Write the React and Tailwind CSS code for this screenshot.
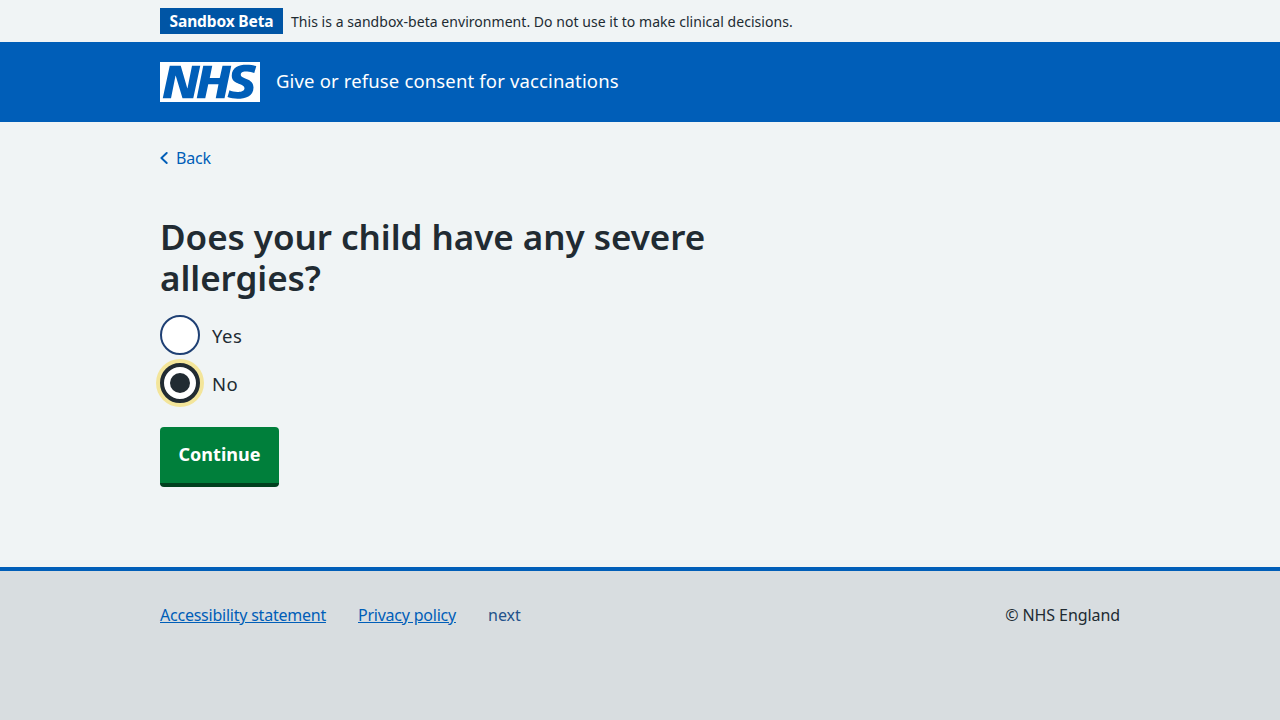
import React from "react";

function NhsLogo() {
  return (
    <svg className="block h-10 w-[100px]" viewBox="0 0 200 80" role="img" aria-label="NHS">
      <path
        fill="#fff"
        d="M200 0v80H0V0h200Zm-27.5 5.5c-14.5 0-29 5-29 22 0 10.2 7.7 13.5 14.7 16.3l.7.3c5.4 2 10.1 3.9 10.1 8.4 0 6.5-8.5 7.5-14 7.5s-12.5-1.5-16-3.5L135 70c5.5 2 13.5 3.5 20 3.5 15.5 0 32-4.5 32-22.5 0-19.5-25.5-16.5-25.5-25.5 0-5.5 5.5-6.5 12.5-6.5a35 35 0 0 1 14.5 3l4-13.5c-4.5-2-12-3-20-3Zm-131 2h-22l-14 65H22l9-45h.5l13.5 45h21.5l14-65H64l-9 45h-.5l-13-45Zm63 0h-18l-13 65h17l6-28H117l-5.5 28H129l13.5-65H125L119.5 32h-20l5-24.5Z"
      />
    </svg>
  );
}

function EnvironmentBanner() {
  return (
    <div className="mx-auto flex h-[42px] w-[960px] items-start gap-2 pt-2 whitespace-nowrap">
      <strong className="flex h-[26px] w-[123px] items-center justify-center bg-[#0055a5] pt-0.5 text-[15.5px] font-bold tracking-[-0.14px] text-white">
        Sandbox Beta
      </strong>
      <span className="text-sm leading-[27px] tracking-[0.04px]">
        This is a sandbox-beta environment. Do not use it to make clinical decisions.
      </span>
    </div>
  );
}

function Radio({ label, checked }) {
  return (
    <label className="flex h-10 items-center gap-3">
      {checked ? (
        <span className="flex size-10 items-center justify-center rounded-full border-4 border-[#212b32] bg-white ring-4 ring-[#f3e59a]">
          <span className="size-5 rounded-full bg-[#212b32]" />
        </span>
      ) : (
        <span className="size-10 rounded-full border-2 border-[#1f4074] bg-white" />
      )}
      <span className="pt-0.5 text-[18.5px] tracking-[0.5px]">{label}</span>
    </label>
  );
}

export default function App() {
  return (
    <div className="flex h-[720px] w-full flex-col overflow-hidden bg-[#f0f4f5] font-['Noto_Sans','Open_Sans',sans-serif] text-[#212b32]">
      <EnvironmentBanner />
      <header className="h-20 bg-[#005eb8]">
        <div className="mx-auto flex h-20 w-[960px] items-center gap-4 text-white">
          <NhsLogo />
          <span className="pb-0.5 text-[18.5px] tracking-[0.15px] whitespace-nowrap">
            Give or refuse consent for vaccinations
          </span>
        </div>
      </header>
      <main className="mx-auto h-[445px] w-[960px] pt-6">
        <a className="flex h-6 w-fit items-center gap-2 text-base tracking-[-0.2px] text-[#005eb8]">
          <svg className="h-3 w-2" viewBox="0 0 8 12" fill="none" stroke="currentColor" strokeWidth="1.9" strokeLinecap="round" strokeLinejoin="round">
            <path d="M6.7 1 1.4 6l5.3 5" />
          </svg>
          <span>Back</span>
        </a>
        <h1 className="mt-[46px] text-[35px] leading-[41px] font-semibold tracking-[-0.04px] whitespace-nowrap">
          Does your child have any severe
          <br />
          allergies?
        </h1>
        <div className="mt-[17px] flex flex-col gap-2">
          <Radio label="Yes" />
          <Radio label="No" checked />
        </div>
        <button className="mt-6 flex h-[60px] w-[119px] items-center justify-center rounded border-b-4 border-[#00401e] bg-[#007f3b] pb-0.5 text-[18px] font-bold tracking-[0.03px] text-white">
          Continue
        </button>
      </main>
      <footer className="flex-1 border-t-4 border-[#005eb8] bg-[#d8dde0]">
        <div className="mx-auto flex w-[960px] items-center pt-8 text-base leading-6 whitespace-nowrap">
          <a className="w-[166px] tracking-[-0.23px] text-[#005eb8] underline">Accessibility statement</a>
          <a className="ml-8 w-[98px] tracking-[-0.23px] text-[#005eb8] underline">Privacy policy</a>
          <a className="ml-8 text-[#23528b]">next</a>
          <span className="ml-auto tracking-[-0.08px]">© NHS England</span>
        </div>
      </footer>
    </div>
  );
}
